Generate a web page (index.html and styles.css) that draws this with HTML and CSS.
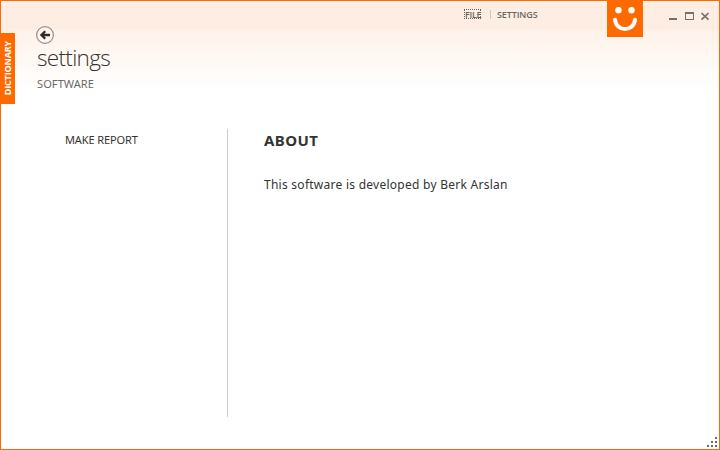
FILE: index.html
```
<!DOCTYPE html>
<html lang="en">
<head>
<meta charset="utf-8">
<title>Dictionary</title>
<link rel="stylesheet" href="styles.css">
</head>
<body>
<div class="window">
  <aside class="rail"><div class="tab"><span>DICTIONARY</span></div></aside>
  <div class="main">
    <header class="header">
      <div class="heading">
        <svg class="back" width="20" height="20" viewBox="0 0 20 20">
          <circle cx="10" cy="10" r="8.4" fill="#fff3eb" stroke="#949290" stroke-width="1.2"/>
          <path d="M15 10H7M10.2 6.2L6.4 10l3.8 3.8" fill="none" stroke="#2b2b2b" stroke-width="2.3"/>
        </svg>
        <h1 class="title">settings</h1>
        <div class="subtitle">SOFTWARE</div>
      </div>
      <nav class="menu">
        <a class="file">FILE</a><i class="sep"></i><a class="set">SETTINGS</a>
      </nav>
      <svg class="logo" width="36" height="36" viewBox="0 0 36 36">
        <rect width="36" height="36" fill="#ff6a00"/>
        <circle cx="11.5" cy="9.3" r="3.2" fill="#fff"/>
        <circle cx="24.5" cy="9.3" r="3.2" fill="#fff"/>
        <path d="M8 18.8C9.5 31.2 26.5 31.2 28 18.8" fill="none" stroke="#fff" stroke-width="4" stroke-linecap="round"/>
      </svg>
      <svg class="controls" width="42" height="12" viewBox="0 0 42 12" fill="none" stroke="#737170">
        <path d="M0 7h8" stroke-width="2"/>
        <path d="M16.5 1v7M24.5 1v7M16 7.5h9" stroke-width="1"/>
        <path d="M16 1h9" stroke-width="2"/>
        <path d="M32.5 1l7 6.6M39.5 1l-7 6.6" stroke-width="1.7"/>
      </svg>
    </header>
    <div class="content">
      <nav class="links">MAKE REPORT</nav>
      <section class="about">
        <h2 class="about-title">ABOUT</h2>
        <p class="about-text">This software is developed by Berk Arslan</p>
      </section>
    </div>
  </div>
  <svg class="grip" width="10" height="10" viewBox="0 0 10 10" fill="#686868">
    <path d="M8 0h2v2H8zM4 4h2v2H4zM8 4h2v2H8zM0 8h2v2H0zM4 8h2v2H4zM8 8h2v2H8z"/>
  </svg>
</div>
</body>
</html>
```

FILE: styles.css
```
* { box-sizing: border-box; }
body { margin: 0; font-family: "Noto Sans", "Open Sans", sans-serif; color: #333; }
.window {
  position: relative;
  display: flex;
  width: 720px;
  height: 450px;
  border: 1px solid #ff6a00;
  overflow: hidden;
  background: linear-gradient(#fdede2 0, #fdede2 26px, #fff3eb 32px, #fff 90px);
}
.rail { width: 14px; padding-top: 32px; }
.tab {
  display: flex;
  align-items: center;
  justify-content: center;
  width: 14px;
  height: 71px;
  background: #ff6a00;
}
.tab span {
  writing-mode: vertical-rl;
  transform: rotate(180deg);
  color: #fff;
  font-family: "Open Sans", sans-serif;
  font-size: 9px;
  font-weight: 700;
  letter-spacing: -0.15px;
  line-height: 14px;
  white-space: nowrap;
}
.main { flex: 1; display: flex; flex-direction: column; }
.header { display: flex; align-items: flex-start; height: 128px; }
.heading { width: 428px; padding: 24px 0 0 22px; margin-right: 21px; }
.back { display: block; margin-left: -2px; }
.title {
  margin: -2px 0 0;
  font-family: "Open Sans", sans-serif;
  font-size: 22.5px;
  font-weight: 300;
  line-height: 30px;
  letter-spacing: -0.68px;
}
.subtitle { margin-top: 3px; font-size: 11px; line-height: 16px; letter-spacing: 0.1px; color: #6a6a6a; }
.menu {
  display: flex;
  width: 143px;
  margin-top: 8px;
  font-family: "Open Sans", sans-serif;
  font-size: 9px;
  font-weight: 600;
  line-height: 11px;
  color: #6c6764;
}
.file { width: 17px; height: 10px; padding-left: 1px; letter-spacing: -0.3px; outline: 1px dotted #666; outline-offset: -1px; }
.sep { width: 1px; height: 9px; margin: 1px 6px 0 9px; background: #c9c7c6; }
.set { letter-spacing: -0.12px; }
.logo { display: block; }
.controls { margin: 11px 0 0 26px; }
.content { display: flex; }
.links {
  width: 213px;
  height: 288px;
  padding: 3px 0 0 50px;
  border-right: 1px solid #ccc;
  font-size: 11px;
  line-height: 16px;
  letter-spacing: -0.12px;
}
.about { padding-left: 36px; }
.about-title { margin: 1px 0 0; font-size: 15px; font-weight: 700; line-height: 21px; letter-spacing: 0.4px; }
.about-text { margin: 25px 0 0; font-size: 12px; line-height: 18px; letter-spacing: 0.26px; }
.grip { position: absolute; right: 2px; bottom: 2px; }
```
